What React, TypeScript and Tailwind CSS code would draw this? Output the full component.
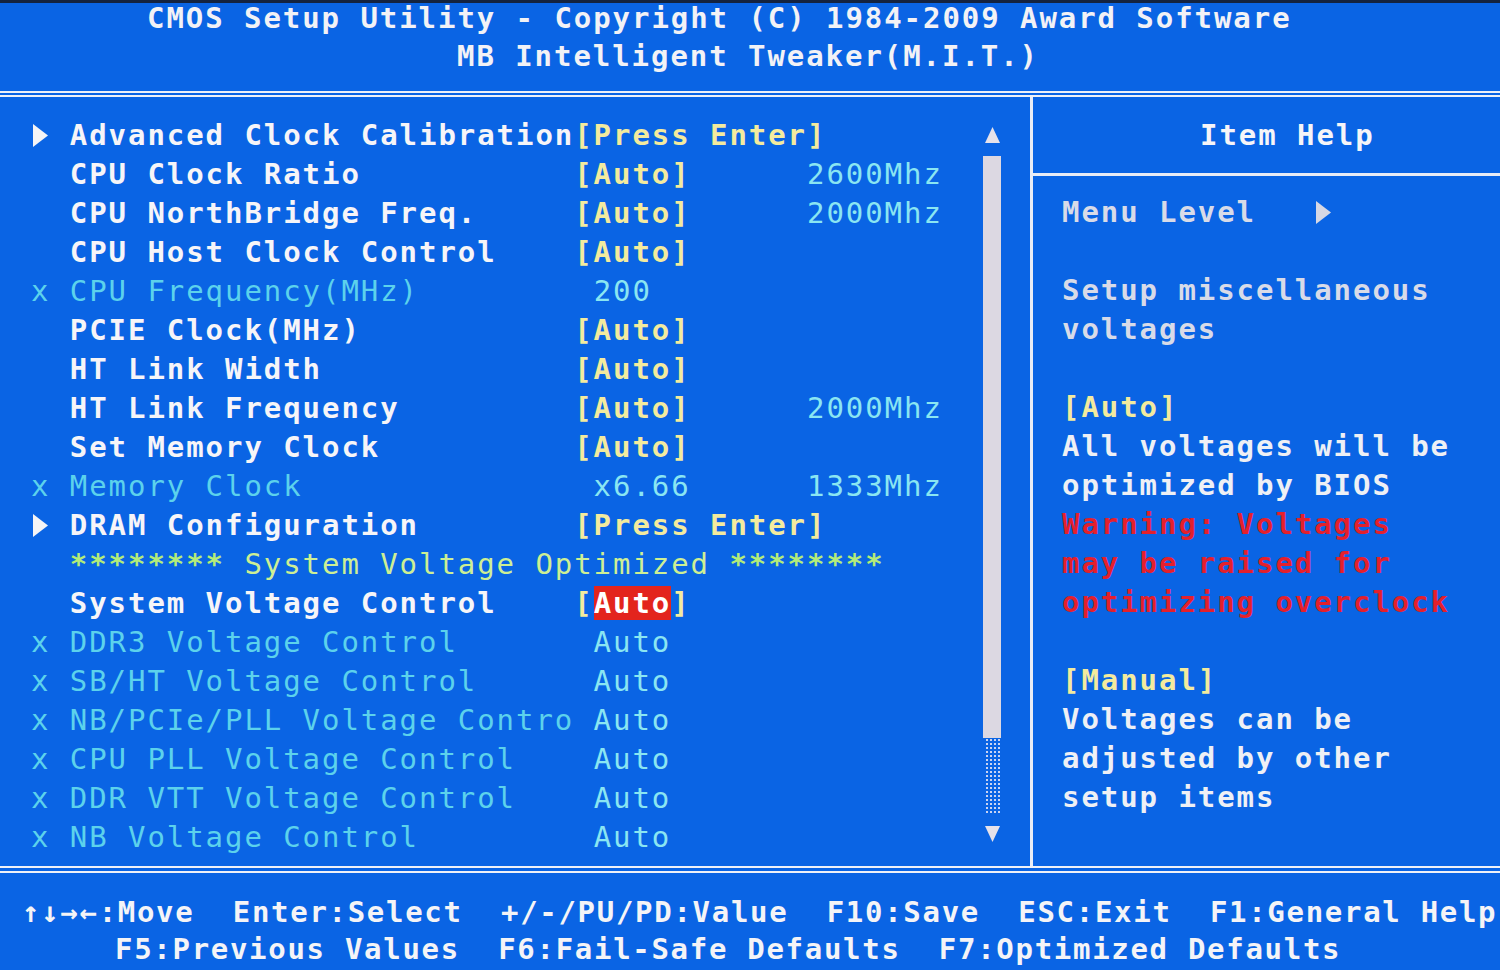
import React from "react";

type Seg = { col: number; text: string; cls: string };
type Row = { mark?: "tri" | "x"; segs: Seg[] };

const white = "text-[#f6f5f8] font-bold";
const yellow = "text-[#f3eb9e] font-bold";
const cyan = "text-[#8ae6f2]";
const dim = "text-[#5cd2ec]";
const stars = "text-[#b4ec78] font-bold";
const green = "text-[#cdef94]";
const hot = "bg-[#e3241d] text-white font-bold";

const rows: Row[] = [
  { mark: "tri", segs: [{ col: 2, text: "Advanced Clock Calibration", cls: white }, { col: 28, text: "[Press Enter]", cls: yellow }] },
  { segs: [{ col: 2, text: "CPU Clock Ratio", cls: white }, { col: 28, text: "[Auto]", cls: yellow }, { col: 40, text: "2600Mhz", cls: cyan }] },
  { segs: [{ col: 2, text: "CPU NorthBridge Freq.", cls: white }, { col: 28, text: "[Auto]", cls: yellow }, { col: 40, text: "2000Mhz", cls: cyan }] },
  { segs: [{ col: 2, text: "CPU Host Clock Control", cls: white }, { col: 28, text: "[Auto]", cls: yellow }] },
  { mark: "x", segs: [{ col: 2, text: "CPU Frequency(MHz)", cls: dim }, { col: 29, text: "200", cls: cyan }] },
  { segs: [{ col: 2, text: "PCIE Clock(MHz)", cls: white }, { col: 28, text: "[Auto]", cls: yellow }] },
  { segs: [{ col: 2, text: "HT Link Width", cls: white }, { col: 28, text: "[Auto]", cls: yellow }] },
  { segs: [{ col: 2, text: "HT Link Frequency", cls: white }, { col: 28, text: "[Auto]", cls: yellow }, { col: 40, text: "2000Mhz", cls: cyan }] },
  { segs: [{ col: 2, text: "Set Memory Clock", cls: white }, { col: 28, text: "[Auto]", cls: yellow }] },
  { mark: "x", segs: [{ col: 2, text: "Memory Clock", cls: dim }, { col: 29, text: "x6.66", cls: cyan }, { col: 40, text: "1333Mhz", cls: cyan }] },
  { mark: "tri", segs: [{ col: 2, text: "DRAM Configuration", cls: white }, { col: 28, text: "[Press Enter]", cls: yellow }] },
  { segs: [{ col: 2, text: "********", cls: stars }, { col: 11, text: "System Voltage Optimized", cls: green }, { col: 36, text: "********", cls: stars }] },
  { segs: [{ col: 2, text: "System Voltage Control", cls: white }, { col: 28, text: "[", cls: yellow }, { col: 29, text: "Auto", cls: hot }, { col: 33, text: "]", cls: yellow }] },
  { mark: "x", segs: [{ col: 2, text: "DDR3 Voltage Control", cls: dim }, { col: 29, text: "Auto", cls: cyan }] },
  { mark: "x", segs: [{ col: 2, text: "SB/HT Voltage Control", cls: dim }, { col: 29, text: "Auto", cls: cyan }] },
  { mark: "x", segs: [{ col: 2, text: "NB/PCIe/PLL Voltage Contro", cls: dim }, { col: 29, text: "Auto", cls: cyan }] },
  { mark: "x", segs: [{ col: 2, text: "CPU PLL Voltage Control", cls: dim }, { col: 29, text: "Auto", cls: cyan }] },
  { mark: "x", segs: [{ col: 2, text: "DDR VTT Voltage Control", cls: dim }, { col: 29, text: "Auto", cls: cyan }] },
  { mark: "x", segs: [{ col: 2, text: "NB Voltage Control", cls: dim }, { col: 29, text: "Auto", cls: cyan }] },
];

const Tri = ({ color = "#f4f4f6" }: { color?: string }) => (
  <span className="inline-flex h-[39px] w-[19.4px] items-center align-top">
    <svg width="15" height="23" viewBox="0 0 15 23" className="ml-[2px]">
      <path d="M0 0 L15 11.5 L0 23 Z" fill={color} />
    </svg>
  </span>
);

const MenuLine = ({ row }: { row: Row }) => {
  const parts: React.ReactNode[] = [];
  let cur = 0;
  if (row.mark === "tri") {
    parts.push(<Tri key="m" />);
    cur = 1;
  } else if (row.mark === "x") {
    parts.push(<span key="m" className={dim}>x</span>);
    cur = 1;
  }
  row.segs.forEach((s, i) => {
    if (s.col > cur) parts.push(" ".repeat(s.col - cur));
    parts.push(<span key={i} className={s.cls}>{s.text}</span>);
    cur = s.col + s.text.length;
  });
  return <div className="h-[39px] leading-[39px] whitespace-pre">{parts}</div>;
};

const HelpLine = ({ children, cls }: { children?: React.ReactNode; cls?: string }) => (
  <div className={`h-[39px] leading-[39px] whitespace-pre ${cls ?? ""}`}>{children}</div>
);

const helpGray = "text-[#d8dbe8] font-bold";
const helpWhite = "text-[#eef0f5] font-bold";
const helpRed = "text-[#e4202c] font-bold";

export default function App() {
  return (
    <div className="w-[1500px] h-[970px] overflow-hidden bg-[#0a64e4] text-[29px] tracking-[1.94px] font-['DejaVu_Sans_Mono','Liberation_Mono',monospace]">
      <div className="h-[3px] bg-[#14233f]" />

      {/* header */}
      <div className="h-[88px] text-[#f2f2f6] font-bold">
        <div className="h-[33px] leading-[30px] pl-[147px] whitespace-pre">CMOS Setup Utility - Copyright (C) 1984-2009 Award Software</div>
        <div className="h-[40px] leading-[40px] pl-[457px] whitespace-pre">MB Intelligent Tweaker(M.I.T.)</div>
      </div>
      <div className="h-[6px] border-y-2 border-[#eef1f8]" />

      {/* body */}
      <div className="flex h-[769px]">
        <div className="w-[1030px] pl-[31px] pt-[18.5px] flex">
          <div className="w-[951px]">
            {rows.map((r, i) => (
              <MenuLine key={i} row={r} />
            ))}
          </div>
          <div className="w-[20px] flex flex-col items-center">
            <svg width="15" height="16" viewBox="0 0 15 16" className="mt-[11.5px] shrink-0">
              <path d="M7.5 0 L15 16 L0 16 Z" fill="#e6e2ea" />
            </svg>
            <div className="mt-[13px] w-[18px] h-[582px] bg-[#dcd8e2] shrink-0" />
            <div className="w-[15px] h-[77px] shrink-0 bg-[radial-gradient(circle,#c9d3f2_0.9px,transparent_1.4px)] bg-[length:4px_4px]" />
            <svg width="15" height="16" viewBox="0 0 15 16" className="mt-[11px] shrink-0">
              <path d="M0 0 L15 0 L7.5 16 Z" fill="#e6e2ea" />
            </svg>
          </div>
        </div>

        <div className="w-[3px] bg-[#e8ecf6]" />

        <div className="flex-1 pt-[18.5px]">
          <div className="h-[39px] leading-[39px] pl-[167px] text-[#f6f5f8] font-bold">Item Help</div>
          <div className="mt-[18.5px] h-[3px] bg-[#e8ecf6]" />
          <div className="pl-[29px] pt-[16.5px]">
            <HelpLine cls={helpGray}>
              {"Menu Level   "}
              <Tri color="#d6d8e4" />
            </HelpLine>
            <HelpLine />
            <HelpLine cls={helpGray}>Setup miscellaneous</HelpLine>
            <HelpLine cls={helpGray}>voltages</HelpLine>
            <HelpLine />
            <HelpLine cls={yellow}>[Auto]</HelpLine>
            <HelpLine cls={helpWhite}>All voltages will be</HelpLine>
            <HelpLine cls={helpWhite}>optimized by BIOS</HelpLine>
            <HelpLine cls={helpRed}>Warning: Voltages</HelpLine>
            <HelpLine cls={helpRed}>may be raised for</HelpLine>
            <HelpLine cls={helpRed}>optimizing overclock</HelpLine>
            <HelpLine />
            <HelpLine cls={yellow}>[Manual]</HelpLine>
            <HelpLine cls={helpWhite}>Voltages can be</HelpLine>
            <HelpLine cls={helpWhite}>adjusted by other</HelpLine>
            <HelpLine cls={helpWhite}>setup items</HelpLine>
          </div>
        </div>
      </div>

      {/* bottom rule */}
      <div className="h-[7px] border-y-2 border-[#eef1f8]" />

      {/* key legend */}
      <div className="pt-[20px] text-[#f4f4f7] font-bold tracking-[1.7px]">
        <div className="h-[38px] leading-[38px] pl-[22px] whitespace-pre">
          {"↑↓→←:Move  Enter:Select  +/-/PU/PD:Value  F10:Save  ESC:Exit  F1:General Help"}
        </div>
        <div className="h-[36px] leading-[36px] pl-[115px] whitespace-pre">
          {"F5:Previous Values  F6:Fail-Safe Defaults  F7:Optimized Defaults"}
        </div>
      </div>
    </div>
  );
}
